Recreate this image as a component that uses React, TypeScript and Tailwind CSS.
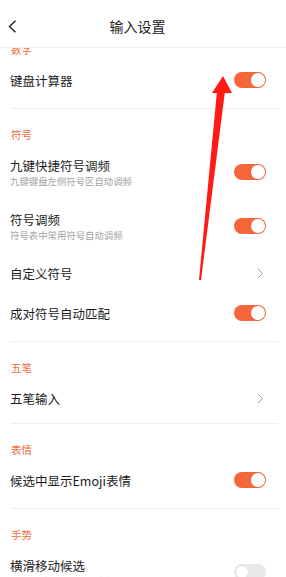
import React from "react";

const FONT = { fontFamily: '"Noto Sans CJK SC", "Noto Sans", sans-serif' };

function Toggle({ on }: { on: boolean }) {
  return on ? (
    <div className="w-[32px] h-[16px] rounded-full bg-[#f5673a] flex items-center justify-end pr-[1px]">
      <div className="w-[14px] h-[14px] rounded-full bg-white" />
    </div>
  ) : (
    <div className="w-[32px] h-[16px] rounded-full bg-[#e8e8e8] flex items-center justify-start pl-[1px]">
      <div className="w-[14px] h-[14px] rounded-full bg-white border border-[#e0e0e0]" />
    </div>
  );
}

function Chevron() {
  return (
    <svg width="7" height="11" viewBox="0 0 7 11" className="mr-[22px]">
      <path d="M1 0.8 L5.5 5.5 L1 10.2" fill="none" stroke="#9a9a9a" strokeWidth="1" />
    </svg>
  );
}

function Label({ text, first }: { text: string; first?: boolean }) {
  return (
    <div
      className={`h-[36px] pl-[11px] pt-[19px] text-[10.5px] leading-[14px] text-[#ee6d3c] ${first ? "mt-[-24px]" : ""}`}
    >
      {text}
    </div>
  );
}

function Row({ title, sub, right }: { title: string; sub?: string; right: React.ReactNode }) {
  return (
    <div className={`flex items-center justify-between pl-[10px] ${sub ? "h-[54px]" : "h-[40px]"}`}>
      <div className="flex flex-col">
        <div className="text-[12.5px] leading-[15px] text-[#1c1c1c]">{title}</div>
        {sub && <div className="mt-[2px] text-[9.4px] leading-[12px] text-[#a3a3a3]">{sub}</div>}
      </div>
      {right}
    </div>
  );
}

function Divider() {
  return <div className="h-px bg-[#eeeeee] ml-[11px] mr-[8px]" />;
}

function Sw({ on }: { on: boolean }) {
  return (
    <div className="mr-[20px]">
      <Toggle on={on} />
    </div>
  );
}

export default function App() {
  return (
    <div className="relative w-[286px] h-[577px] overflow-hidden bg-white" style={FONT}>
      <div className="relative z-10 h-[48px] pt-[5px] bg-white border-b border-[#eeeeee] grid grid-cols-[34px_1fr_45px] items-center">
        <div className="flex justify-end pr-[17px]">
          <svg width="9" height="13" viewBox="0 0 9 13">
            <path d="M7.5 0.8 L1.5 6.5 L7.5 12.2" fill="none" stroke="#222" strokeWidth="1.4" />
          </svg>
        </div>
        <div className="text-center text-[14px] leading-[20px] text-[#1c1c1c]">输入设置</div>
        <div />
      </div>

      <div className="flex flex-col">
        <Label text="数字" first />
        <Row title="键盘计算器" right={<Sw on />} />
        <div className="h-[8px]" />
        <Divider />

        <Label text="符号" />
        <Row title="九键快捷符号调频" sub="九键键盘左侧符号区自动调频" right={<Sw on />} />
        <Row title="符号调频" sub="符号表中常用符号自动调频" right={<Sw on />} />
        <Row title="自定义符号" right={<Chevron />} />
        <Row title="成对符号自动匹配" right={<Sw on />} />
        <div className="h-[8px]" />
        <Divider />

        <Label text="五笔" />
        <Row title="五笔输入" right={<Chevron />} />
        <div className="h-[5px]" />
        <Divider />

        <Label text="表情" />
        <Row title="候选中显示Emoji表情" right={<Sw on />} />
        <div className="h-[8px]" />
        <Divider />

        <Label text="手势" />
        <Row title="横滑移动候选" sub="有候选时，左右滑动键盘移动候选" right={<Sw on={false} />} />
      </div>

      <svg
        className="absolute left-0 top-0 pointer-events-none z-20"
        width="286"
        height="577"
        viewBox="0 0 286 577"
      >
        <polygon points="217,91 225,91 201,280 199,280" fill="#ff1a14" />
        <polygon points="223,76 232,93 212,93" fill="#ff1a14" />
      </svg>
    </div>
  );
}
